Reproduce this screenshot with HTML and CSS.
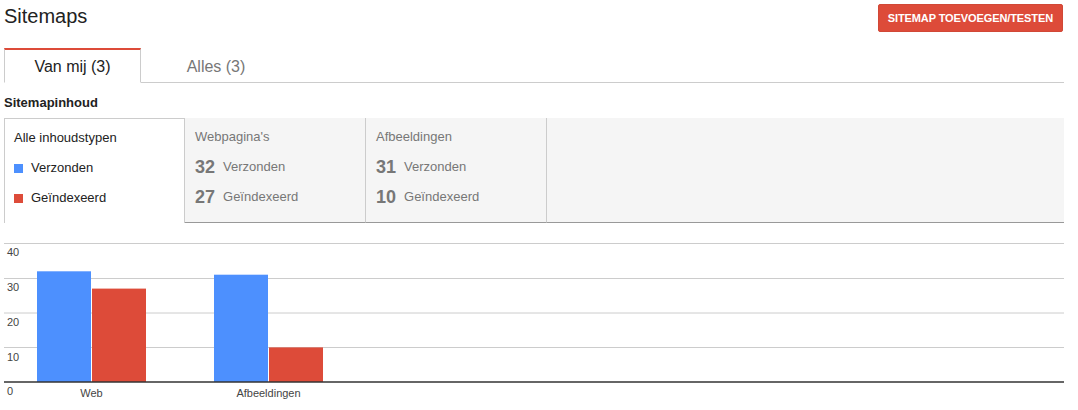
FILE: index.html
```html
<!DOCTYPE html>
<html>
<head>
<meta charset="utf-8">
<link rel="stylesheet" href="styles.css">
</head>
<body>
<div class="page">
  <div class="header">
    <h1 class="title">Sitemaps</h1>
    <button class="btn-red">SITEMAP TOEVOEGEN/TESTEN</button>
  </div>
  <div class="tabs">
    <div class="tab tab-active">Van mij (3)</div>
    <div class="tab">Alles (3)</div>
  </div>
  <div class="section-title">Sitemapinhoud</div>
  <div class="panel">
    <div class="cell cell-first">
      <div class="row">Alle inhoudstypen</div>
      <div class="row"><span class="sq sq-blue"></span>Verzonden</div>
      <div class="row"><span class="sq sq-red"></span>Geïndexeerd</div>
    </div>
    <div class="cell cell-gray">
      <div class="row">Webpagina's</div>
      <div class="row"><span class="num">32</span>Verzonden</div>
      <div class="row"><span class="num">27</span>Geïndexeerd</div>
    </div>
    <div class="cell cell-gray">
      <div class="row">Afbeeldingen</div>
      <div class="row"><span class="num">31</span>Verzonden</div>
      <div class="row"><span class="num">10</span>Geïndexeerd</div>
    </div>
    <div class="cell-fill"></div>
  </div>
  <svg class="chart" width="1060" height="172" viewBox="0 0 1060 172">
    <g stroke="#cccccc" stroke-width="1">
      <line x1="0" y1="13.5" x2="1060" y2="13.5"/>
      <line x1="0" y1="48.5" x2="1060" y2="48.5"/>
      <line x1="0" y1="83" x2="1060" y2="83"/>
      <line x1="0" y1="117.5" x2="1060" y2="117.5"/>
    </g>
    <rect x="33" y="41.3" width="54" height="110.7" fill="#4d90fe"/>
    <rect x="88" y="58.6" width="54" height="93.4" fill="#dd4b39"/>
    <rect x="210" y="44.7" width="54" height="107.3" fill="#4d90fe"/>
    <rect x="265" y="117.4" width="54" height="34.6" fill="#dd4b39"/>
    <line x1="0" y1="152" x2="1060" y2="152" stroke="#333333" stroke-width="1.3"/>
    <g class="axis">
      <text x="3" y="26">40</text>
      <text x="3" y="61">30</text>
      <text x="3" y="96">20</text>
      <text x="3" y="130.5">10</text>
      <text x="3" y="164.5">0</text>
    </g>
    <g class="cat">
      <text x="87.5" y="166.5">Web</text>
      <text x="264.5" y="166.5">Afbeeldingen</text>
    </g>
  </svg>
</div>
</body>
</html>
```
FILE: styles.css
```css
html, body {
  margin: 0;
  padding: 0;
  background: #ffffff;
}
body {
  font-family: "Liberation Sans", Arial, sans-serif;
  color: #222222;
}
.page {
  padding: 4px 14px 0 4px;
}
.header {
  display: flex;
  justify-content: space-between;
  align-items: flex-start;
  height: 28px;
}
.title {
  margin: 0;
  font-size: 20px;
  font-weight: normal;
  line-height: 24px;
  color: #222222;
}
.btn-red {
  height: 28px;
  padding: 0 9px;
  margin-right: 1px;
  border: 1px solid #d14836;
  border-radius: 2px;
  background: #dd4b39;
  color: #ffffff;
  font-family: "Liberation Sans", Arial, sans-serif;
  font-size: 11px;
  font-weight: bold;
  letter-spacing: -0.1px;
}
.tabs {
  display: flex;
  margin-top: 16px;
  border-bottom: 1px solid #cccccc;
}
.tab {
  width: 150px;
  height: 32px;
  line-height: 34px;
  text-align: center;
  font-size: 16px;
  color: #777777;
  border-top: 2px solid transparent;
}
.tab-active {
  width: 135px;
  color: #222222;
  background: #ffffff;
  border-top: 2px solid #dd4b39;
  border-left: 1px solid #cccccc;
  border-right: 1px solid #cccccc;
  border-bottom: 1px solid #ffffff;
  margin-bottom: -1px;
}
.section-title {
  margin-top: 12px;
  font-size: 13px;
  font-weight: bold;
  line-height: 16px;
  height: 23px;
}
.panel {
  display: flex;
  height: 105px;
}
.cell {
  box-sizing: border-box;
  height: 105px;
  padding-top: 4px;
  font-size: 13px;
}
.cell-first {
  width: 181px;
  padding-left: 9px;
  border: 1px solid #cccccc;
  border-bottom: none;
  background: #ffffff;
  color: #222222;
}
.cell-gray {
  width: 181px;
  padding-left: 10px;
  padding-top: 3px;
  background: #f5f5f5;
  border-right: 1px solid #cccccc;
  border-bottom: 1px solid #999999;
  color: #777777;
}
.cell-fill {
  flex: 1;
  height: 105px;
  box-sizing: border-box;
  background: #f5f5f5;
  border-bottom: 1px solid #999999;
}
.row {
  height: 30px;
  line-height: 30px;
  display: flex;
  align-items: center;
}
.cell-gray .row:first-child {
  height: 31px;
}
.sq {
  display: inline-block;
  width: 9px;
  height: 9px;
  margin-right: 8px;
}
.sq-blue { background: #4d90fe; }
.sq-red { background: #dd4b39; }
.num {
  font-size: 18px;
  font-weight: bold;
  color: #777777;
  margin-right: 8px;
}
.chart {
  display: block;
  margin-top: 7px;
}
.axis text {
  font-family: "Liberation Sans", Arial, sans-serif;
  font-size: 11px;
  fill: #444444;
}
.cat text {
  font-family: "Liberation Sans", Arial, sans-serif;
  font-size: 11px;
  fill: #444444;
  text-anchor: middle;
}
```
